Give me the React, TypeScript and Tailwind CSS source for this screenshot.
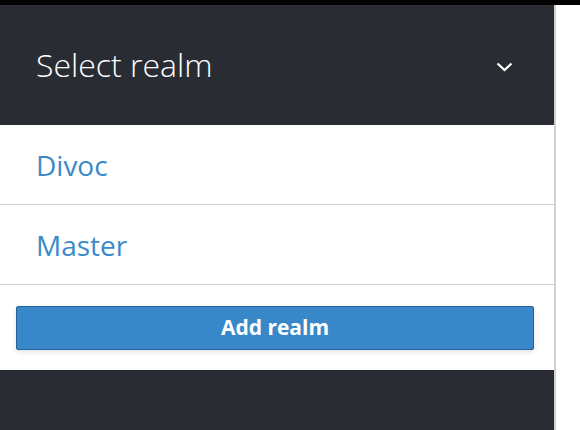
import React from "react";

export default function App() {
  return (
    <div
      className="w-[580px] h-[430px] bg-white flex flex-col overflow-hidden"
      style={{ fontFamily: '"Open Sans", "Noto Sans", sans-serif' }}
    >
      <div className="h-[5px] bg-black shrink-0" />
      <div className="flex flex-1 min-h-0">
        <div className="w-[556px] border-r-2 border-[#d1d1d1] flex flex-col">
          <div className="h-[120px] bg-[#292d33] flex items-center justify-between pl-[36px] pr-[41px] shrink-0">
            <span className="text-[32px] text-white font-light leading-none pb-[1px]">Select realm</span>
            <svg width="17" height="10" viewBox="0 0 17 10" className="mt-[4px]">
              <polyline points="1.5,1.5 8.5,8 15.5,1.5" fill="none" stroke="white" strokeWidth="2.2" />
            </svg>
          </div>
          <div className="h-[80px] border-b border-[#d1d1d1] flex items-center pl-[36px] shrink-0">
            <span className="text-[28px] text-[#3a8ac8] leading-none">Divoc</span>
          </div>
          <div className="h-[80px] border-b border-[#d1d1d1] flex items-center pl-[36px] shrink-0">
            <span className="text-[28px] text-[#3a8ac8] leading-none">Master</span>
          </div>
          <div className="h-[85px] pt-[21px] pl-[16px] pr-[20px] shrink-0">
            <button className="w-full h-[44px] bg-[#3888c9] border border-[#24649a] rounded-[2px] shadow-[0_2px_5px_rgba(0,0,0,0.12)] text-white text-[21px] font-bold flex items-center justify-center">
              Add realm
            </button>
          </div>
          <div className="flex-1 bg-[#292d33]" />
        </div>
        <div className="flex-1 bg-white" />
      </div>
    </div>
  );
}
